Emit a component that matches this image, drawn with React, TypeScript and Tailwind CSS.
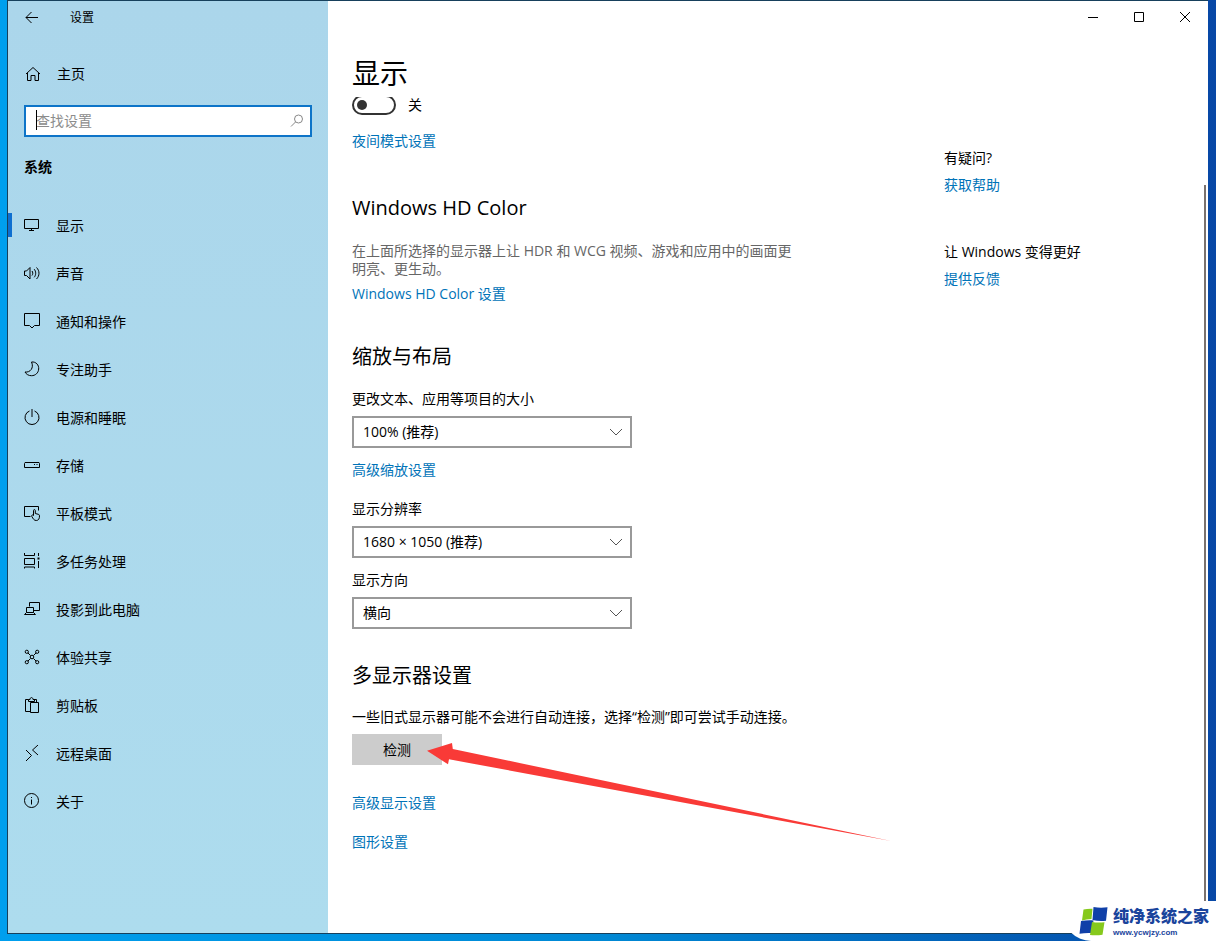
import type { ReactNode } from 'react';

function Icon({ children }: { children: ReactNode }) {
  return (
    <svg viewBox="0 0 16 16" className="size-4 shrink-0" fill="none" stroke="currentColor" aria-hidden="true">
      {children}
    </svg>
  );
}

const navItems: { label: string; icon: ReactNode; active?: boolean }[] = [
  {
    label: '显示',
    active: true,
    icon: <path d="M.5 2.500h14v9H.5zM7.500 11.500v2M5 13.500h5" />,
  },
  {
    label: '声音',
    icon: (
      <path d="M.5 6v4.500h2l3.500 3.500V2.500L2.500 6zM8 6c1 1.200 1 3.300 0 4.500M10.200 4.200c2 2.300 2 5.800 0 8.100M12.500 2.500c3.300 3.300 3.300 8.200 0 11.500" />
    ),
  },
  {
    label: '通知和操作',
    icon: <path d="M.5.5h15v12h-5L8 15l-2.500-2.500h-5z" />,
  },
  {
    label: '专注助手',
    icon: <path d="M7.500 1c4.500-.5 7.500 3 7.200 7-.3 4-3.400 6.700-7.200 6.700-2.900 0-5.300-1.400-6.500-3.700 5 .8 9.300-4 6.500-10z" />,
  },
  {
    label: '电源和睡眠',
    icon: <path d="M5.500 2A7 7 0 1 0 10.500 2M8 0v8" />,
  },
  {
    label: '存储',
    icon: (
      <>
        <path d="M1 5.500h14l.5 1v4H.5v-4z" />
        <path d="M10 7.500h1M12.500 7.500h1" />
      </>
    ),
  },
  {
    label: '平板模式',
    icon: (
      <>
        <path d="M6.500 11.500h-6v-10h14v4" />
        <path d="M9.500 10.500V5.500c0-1.200 1.800-1.200 1.800 0v3l3 .8c.8.200 1.200.7 1.200 1.500 0 2.700-.8 4.700-3.200 4.700-2.300 0-3-1.500-4.600-4.300-.4-1.200 1.200-1.700 1.800-.7z" />
      </>
    ),
  },
  {
    label: '多任务处理',
    icon: (
      <>
        <path d="M.5 5.500h10v6H.5zM.5 0v2.500h10V0M.5 15.500v-1.500h10v1.500" />
        <path d="M14.500 0v3M14.500 8V15" />
        <path d="M13.500 5.500h2" strokeWidth="2" />
      </>
    ),
  },
  {
    label: '投影到此电脑',
    icon: <path d="M5.500 5.500v-4h10v8h-6M2.500 6.500h7v5h-7zM2.500 11.500l-2 2h11l-2-2" />,
  },
  {
    label: '体验共享',
    icon: (
      <>
        <path d="M4 4l2.500 2.500M12 4L9.500 6.500M4 12l2.500-2.500M12 12L9.500 9.500" />
        <circle cx="8" cy="8" r="1.800" />
        <circle cx="2.800" cy="2.800" r="1.600" />
        <circle cx="13.200" cy="2.800" r="1.600" />
        <circle cx="2.800" cy="13.200" r="1.600" />
        <circle cx="13.200" cy="13.200" r="1.600" />
      </>
    ),
  },
  {
    label: '剪贴板',
    icon: <path d="M6 14.500H1.500v-12h3M9.500 2.500h3v3M4.500 4.500v-2h1.500c0-2.600 3-2.600 3 0h1.500v2zM6.500 5.500h8v10h-8z" />,
  },
  {
    label: '远程桌面',
    icon: <path d="M2 5l5.500 5.500L2 16M14 0L8.500 5l5.500 5" />,
  },
  {
    label: '关于',
    icon: (
      <>
        <circle cx="7.500" cy="7.500" r="7" />
        <path d="M7.500 6.500v5M7.500 4v1" />
      </>
    ),
  },
];

function TextLink({ children, className = '' }: { children: ReactNode; className?: string }) {
  return (
    <a href="#" className={`block w-fit text-sm leading-5 text-[#0073b8] hover:text-gray-500 ${className}`}>
      {children}
    </a>
  );
}

function Heading({ children, className = '' }: { children: ReactNode; className?: string }) {
  return <h2 className={`text-xl leading-7 font-normal ${className}`}>{children}</h2>;
}

function SelectField({
  id,
  label,
  options,
  className = '',
}: {
  id: string;
  label: string;
  options: string[];
  className?: string;
}) {
  return (
    <div className={className}>
      <label htmlFor={id} className="block text-sm leading-5">
        {label}
      </label>
      <div className="relative mt-[7px] w-[280px]">
        <select
          id={id}
          className="block h-8 w-full appearance-none border-2 border-[#999] bg-white px-[9px] text-sm text-black"
        >
          {options.map((option) => (
            <option key={option}>{option}</option>
          ))}
        </select>
        <svg
          viewBox="0 0 14 8"
          className="pointer-events-none absolute top-3 right-[9px] h-2 w-[14px]"
          fill="none"
          stroke="#555"
          aria-hidden="true"
        >
          <path d="M1 1l6 6 6-6" />
        </svg>
      </div>
    </div>
  );
}

function Sidebar() {
  return (
    <aside className="flex w-80 shrink-0 flex-col bg-linear-to-b from-[#abd6eb] to-[#addcee]">
      <div className="flex h-[33px] items-center gap-[30px] pl-4">
        <button type="button" aria-label="返回" className="flex">
          <Icon>
            <path d="M2 7.500h12M7.500 2L2 7.500 7.500 13" />
          </Icon>
        </button>
        <span className="text-xs">设置</span>
      </div>
      <a href="#" className="mt-[30px] flex h-5 items-center gap-4 pl-[17px] text-sm">
        <Icon>
          <path d="M1 8l7-6.500L15 8M2.500 7v7.500h3.500v-5h4v5h3.500V7" />
        </Icon>
        主页
      </a>
      <div className="relative mx-4 mt-[21px]">
        <input
          type="text"
          aria-label="查找设置"
          placeholder="查找设置"
          className="block h-8 w-full border-2 border-[#0d74c8] bg-white pr-8 pb-[2px] pl-[10px] text-sm outline-none placeholder:text-[#8c8c8c]"
        />
        <span className="absolute top-[5px] left-3 h-5 w-px bg-black" />
        <svg
          viewBox="0 0 14 14"
          className="absolute top-[9px] right-2 size-[14px]"
          fill="none"
          stroke="#888"
          aria-hidden="true"
        >
          <circle cx="8.500" cy="5" r="4" />
          <path d="M5.500 8L1 12.500" />
        </svg>
      </div>
      <h3 className="mt-5 pl-4 text-sm leading-5 font-bold">系统</h3>
      <nav className="mt-6 flex flex-col">
        {navItems.map((item) => (
          <a key={item.label} href="#" className="flex h-12 items-center text-sm">
            <span className={item.active ? 'h-6 w-1 bg-[#0f6fd0]' : 'h-6 w-1'} />
            <span className="flex items-center gap-4 pl-3">
              <Icon>{item.icon}</Icon>
              <span className="pt-[2px]">{item.label}</span>
            </span>
          </a>
        ))}
      </nav>
    </aside>
  );
}

function WindowControls() {
  const button = 'flex h-8 w-[46px] items-center justify-center hover:bg-gray-200';
  return (
    <div className="flex justify-end">
      <button type="button" aria-label="最小化" className={button}>
        <svg viewBox="0 0 10 10" className="size-[10px]" stroke="black" aria-hidden="true">
          <path d="M0 5.500h10" />
        </svg>
      </button>
      <button type="button" aria-label="最大化" className={button}>
        <svg viewBox="0 0 10 10" className="size-[10px]" fill="none" stroke="black" aria-hidden="true">
          <path d="M.5.5h9v9h-9z" />
        </svg>
      </button>
      <button type="button" aria-label="关闭" className={button}>
        <svg viewBox="0 0 10 10" className="size-[10px]" stroke="black" aria-hidden="true">
          <path d="M0 0l10 10M10 0L0 10" />
        </svg>
      </button>
    </div>
  );
}

function DisplaySettings() {
  return (
    <section className="w-[592px] shrink-0">
      <h1 className="mt-[22px] text-[28px] leading-9">显示</h1>
      <label className="mt-1 flex h-5 w-fit items-end gap-3 text-sm leading-5">
        <span className="relative flex h-[18px] items-end overflow-hidden">
          <input
            type="checkbox"
            role="switch"
            className="peer h-5 w-11 shrink-0 appearance-none rounded-full border-2 border-[#333] bg-white"
          />
          <span className="pointer-events-none absolute bottom-[5px] left-[5px] size-[10px] rounded-full bg-[#333] peer-checked:left-[29px]" />
        </span>
        关
      </label>
      <TextLink className="mt-4">夜间模式设置</TextLink>

      <Heading className="mt-[43px]">Windows HD Color</Heading>
      <p className="mt-5 w-[444px] text-sm leading-[18px] text-[#666]">
        在上面所选择的显示器上让 HDR 和 WCG 视频、游戏和应用中的画面更明亮、更生动。
      </p>
      <TextLink className="mt-[6px]">Windows HD Color 设置</TextLink>

      <Heading className="mt-[39px]">缩放与布局</Heading>
      <SelectField
        id="scale"
        label="更改文本、应用等项目的大小"
        options={['100% (推荐)', '125%', '150%']}
        className="mt-[18px]"
      />
      <TextLink className="mt-3">高级缩放设置</TextLink>
      <SelectField
        id="resolution"
        label="显示分辨率"
        options={['1680 × 1050 (推荐)', '1440 × 900']}
        className="mt-[19px]"
      />
      <SelectField id="orientation" label="显示方向" options={['横向', '纵向']} className="mt-3" />

      <Heading className="mt-[33px]">多显示器设置</Heading>
      <p className="mt-[17px] text-sm leading-5 whitespace-nowrap">
        一些旧式显示器可能不会进行自动连接，选择“检测”即可尝试手动连接。
      </p>
      <div className="relative mt-[7px]">
        <button type="button" className="block h-[31px] w-[90px] bg-[#ccc] text-sm">
          检测
        </button>
        <svg
          viewBox="0 0 470 104"
          className="pointer-events-none absolute top-[6px] left-[72px] h-[104px] w-[470px]"
          fill="#f93a37"
          aria-hidden="true"
        >
          <path d="M3 10.700L28 3l.8 6L467 101 25 19.300l-1 5z" />
        </svg>
      </div>
      <TextLink className="mt-7">高级显示设置</TextLink>
      <TextLink className="mt-[19px]">图形设置</TextLink>
    </section>
  );
}

function HelpPanel() {
  return (
    <section className="mt-[115px] text-sm leading-5">
      <p>有疑问?</p>
      <TextLink className="mt-[7px]">获取帮助</TextLink>
      <p className="mt-[47px]">让 Windows 变得更好</p>
      <TextLink className="mt-[7px]">提供反馈</TextLink>
    </section>
  );
}

function Watermark() {
  return (
    <div className="absolute right-0 bottom-0 flex h-10 items-center gap-1 rounded-bl-[28px] bg-white pr-[7px] pl-4">
      <svg viewBox="0 0 30 30" className="size-[30px]" aria-hidden="true">
        <path fill="#86c91c" d="M4.500 3.500q4-1 9-.8l-1 10.300q-5 .2-9.500 1.500z" />
        <path fill="#1040a8" d="M14.500 1q7 1.200 14 .2l-1.500 13.500q-7 .8-13.500-.7z" />
        <path fill="#1040a8" d="M2 15q5-1 10.500-.8l2 .2-2 12.600q-6-.4-12 .8z" />
        <path fill="#86c91c" d="M13 16q6 1 12.500.2l-2 12.500q-6 1-12.500.3z" />
      </svg>
      <div className="text-[#1a449c]">
        <div className="text-base leading-6 font-black">纯净系统之家</div>
        <div className="font-['Liberation_Sans',sans-serif] text-[8px] leading-[10px] font-bold">www.ycwjzy.com</div>
      </div>
    </div>
  );
}

export default function App() {
  return (
    <div className="relative flex min-h-screen bg-linear-to-r from-[#009fee] via-[#0088d4] to-[#0848a6] pr-2 pb-[7px] pl-[7px] font-['Open_Sans','Noto_Sans_CJK_SC',sans-serif] text-black">
      <div className="flex flex-1 border border-r-0 border-[#17405c]">
        <Sidebar />
        <main className="flex min-w-0 flex-1 flex-col bg-white">
          <WindowControls />
          <div className="flex flex-1">
            <div className="flex min-w-0 flex-1 pl-6">
              <DisplaySettings />
              <HelpPanel />
            </div>
            <div className="mt-[152px] mr-[2px] w-[2px] bg-[#7a726e]" />
          </div>
        </main>
      </div>
      <Watermark />
    </div>
  );
}
